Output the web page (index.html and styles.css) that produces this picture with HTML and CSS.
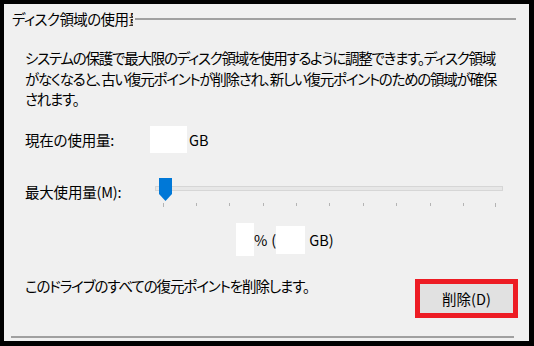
FILE: index.html
```html
<!DOCTYPE html>
<html lang="ja">
<head>
<meta charset="utf-8">
<link rel="stylesheet" href="styles.css">
</head>
<body>
<div class="panel">
  <div class="legend"><span class="legend-text">ディスク領域の使用量</span><span class="legend-line"></span></div>
  <div class="content">
    <p class="desc">システムの保護で最大限のディスク領域を使用するように調整できます。ディスク領域<br>がなくなると、古い復元ポイントが削除され、新しい復元ポイントのための領域が確保<br>されます。</p>
    <div class="row usage"><span class="label">現在の使用量:</span><span class="box box-cur"></span><span class="unit">GB</span></div>
    <div class="row max"><span class="label label-max">最大使用量(M):</span>
      <svg class="slider" width="350" height="30" viewBox="0 0 350 30">
        <rect x="0.5" y="8.5" width="347" height="4" fill="#e7e7e7" stroke="#d6d6d6"/>
        <g stroke="#b4b4b4" stroke-width="1">
          <line x1="8.5" y1="25" x2="8.5" y2="29"/>
          <line x1="41.5" y1="25" x2="41.5" y2="28"/>
          <line x1="74.5" y1="25" x2="74.5" y2="28"/>
          <line x1="108.5" y1="25" x2="108.5" y2="28"/>
          <line x1="141.5" y1="25" x2="141.5" y2="28"/>
          <line x1="174.5" y1="25" x2="174.5" y2="28"/>
          <line x1="208.5" y1="25" x2="208.5" y2="28"/>
          <line x1="241.5" y1="25" x2="241.5" y2="28"/>
          <line x1="275.5" y1="25" x2="275.5" y2="28"/>
          <line x1="308.5" y1="25" x2="308.5" y2="28"/>
          <line x1="340.5" y1="25" x2="340.5" y2="29"/>
        </g>
        <polygon points="4,0 17,0 17,16 10.5,23 4,16" fill="#0078d7"/>
      </svg>
    </div>
    <div class="row pct"><span class="box box-p"></span><span class="sym">%</span><span class="paren">(</span><span class="box box-g"></span><span class="unit2">GB)</span></div>
    <div class="row del"><span class="del-text">このドライブのすべての復元ポイントを削除します。</span><span class="btn">削除(D)</span></div>
  </div>
  <div class="bottom-line"></div>
</div>
</body>
</html>
```

FILE: styles.css
```css
html, body {
  margin: 0;
  padding: 0;
  background: #000;
}
body {
  width: 534px;
  height: 346px;
  overflow: hidden;
  font-family: "Noto Sans CJK JP", "Noto Sans", sans-serif;
  font-size: 14.5px;
  font-feature-settings: "palt";
  color: #000;
}
.panel {
  margin: 4px 5px 0 4px;
  width: 525px;
  height: 337px;
  background: #f0f0f0;
  display: flex;
  flex-direction: column;
}
.legend {
  display: flex;
  align-items: center;
  height: 20px;
  margin: 5px 13px 0 8px;
}
.legend-text {
  width: 121px;
  overflow: hidden;
  white-space: nowrap;
  line-height: 20px;
  letter-spacing: -0.6px;
}
.legend-line {
  flex: 1;
  height: 2px;
  background: #a0a0a0;
  margin-left: 2px;
}
.content {
  padding: 0 11px 0 21px;
}
.desc {
  margin: 19px 0 0;
  line-height: 20.5px;
  white-space: nowrap;
  letter-spacing: -1.25px;
}
.row {
  display: flex;
}
.usage {
  margin-top: 16.5px;
  height: 27px;
  align-items: center;
}
.label {
  width: 125px;
  flex: none;
  letter-spacing: -0.2px;
}
.box {
  background: #fff;
  flex: none;
}
.box-cur {
  width: 37px;
  height: 27px;
}
.unit {
  margin-left: 2px;
}
.max {
  margin-top: 25px;
  height: 28px;
  align-items: flex-start;
}
.label-max {
  width: 130px;
  line-height: 28px;
}
.slider {
  display: block;
  flex: none;
}
.pct {
  margin-top: 17px;
  height: 33px;
  align-items: center;
  padding-left: 211px;
}
.box-p {
  width: 18px;
  height: 33px;
}
.box-g {
  width: 29px;
  height: 28px;
}
.paren {
  margin-left: 4px;
}
.unit2 {
  margin-left: 4px;
}
.del {
  margin-top: 23px;
  justify-content: space-between;
  align-items: flex-start;
}
.del-text {
  line-height: 20px;
  margin-top: -3px;
  letter-spacing: -1.1px;
}
.btn {
  width: 103px;
  height: 39px;
  box-sizing: border-box;
  border: 5px solid #ed1c24;
  background: #e1e1e1;
  display: flex;
  align-items: center;
  justify-content: center;
  flex: none;
}
.bottom-line {
  margin: auto 15px 3px 7px;
  height: 2px;
  background: #a0a0a0;
}
```
